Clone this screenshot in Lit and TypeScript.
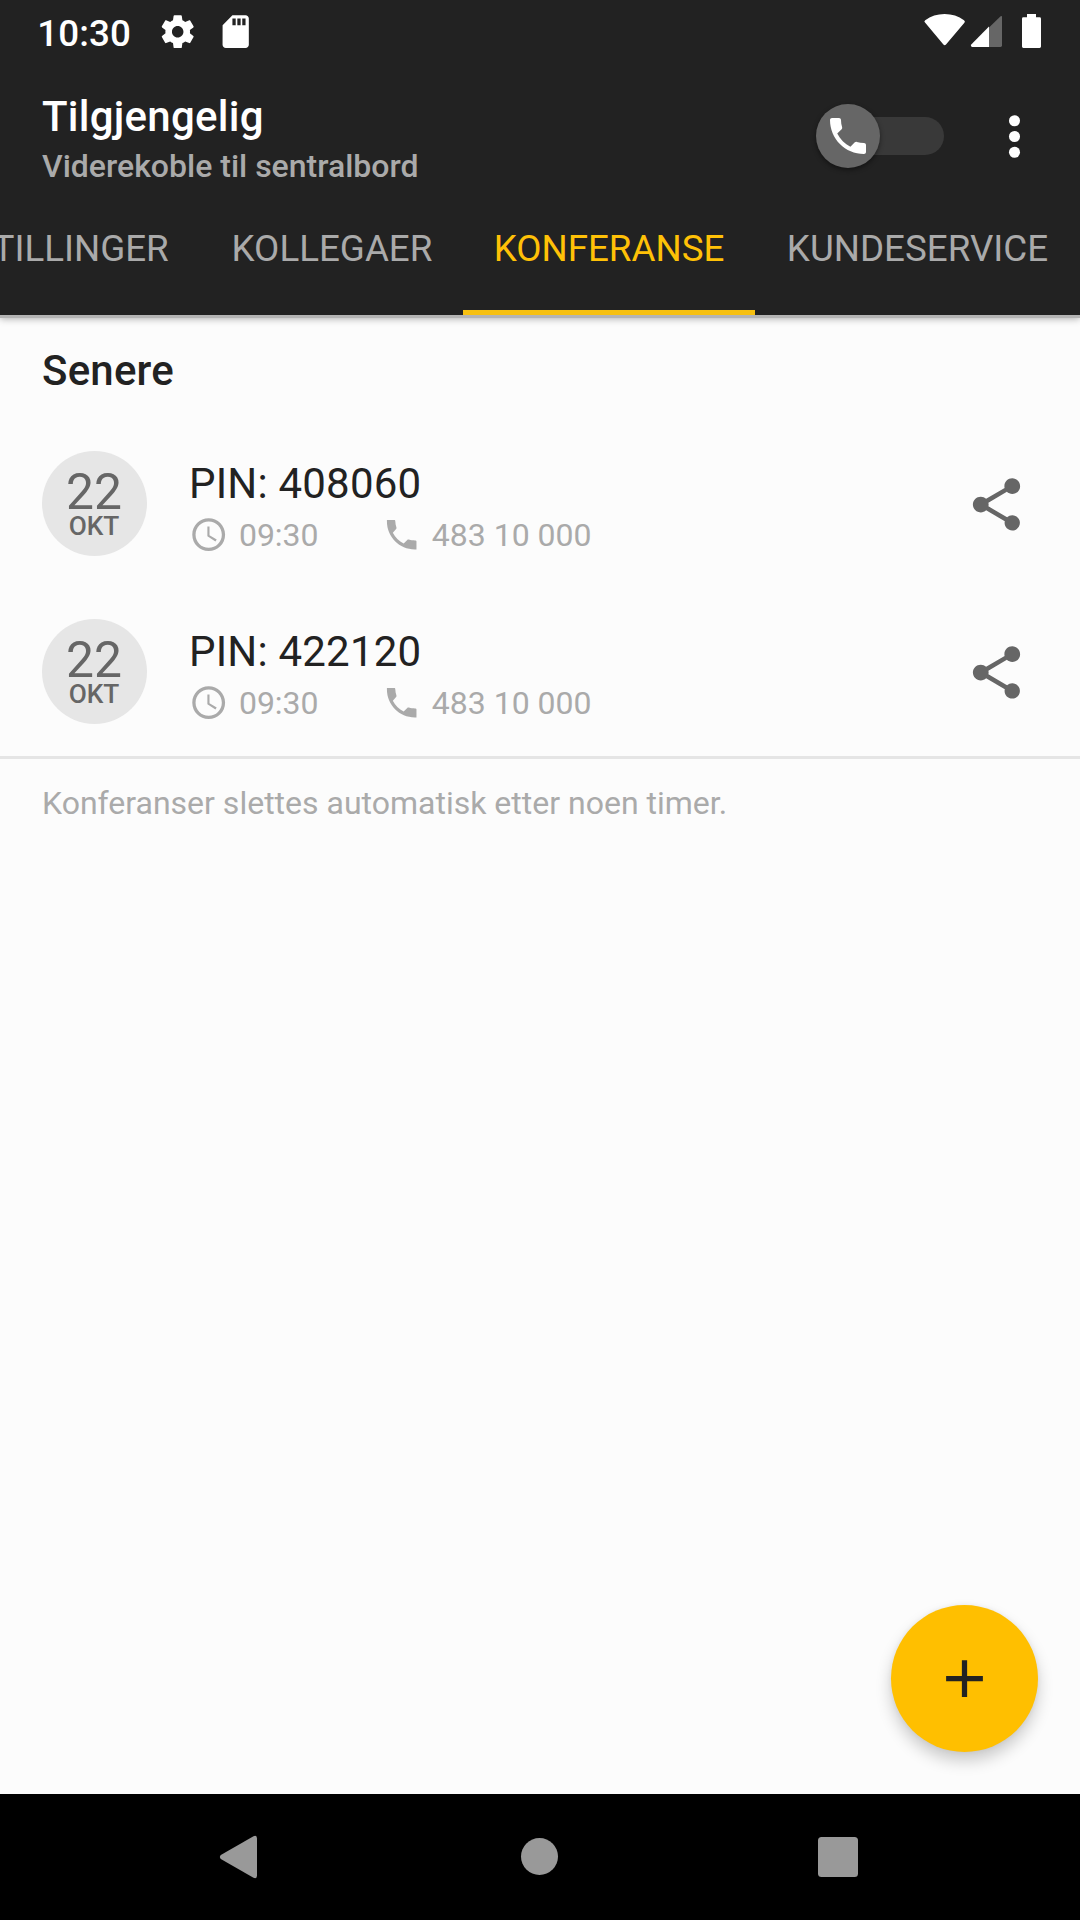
import { LitElement, html, css, svg } from "lit";
import { customElement, property } from "lit/decorators.js";
import { classMap } from "lit/directives/class-map.js";
import { styleMap } from "lit/directives/style-map.js";

const PHONE = svg`<path d="M6.62 10.79c1.44 2.83 3.76 5.14 6.59 6.59l2.2-2.2c.27-.27.67-.36 1.02-.24 1.12.37 2.33.57 3.57.57.55 0 1 .45 1 1V20c0 .55-.45 1-1 1-9.39 0-17-7.61-17-17 0-.55.45-1 1-1h3.5c.55 0 1 .45 1 1 0 1.25.2 2.45.57 3.57.11.35.03.74-.25 1.02l-2.2 2.2z"/>`;

const PHONE_SHARP = svg`<path d="M3 3H7.4C7.9 3 8.1 3.3 8.1 3.8C8.1 5.1 8.4 6.4 8.8 7.6C8.9 7.9 8.9 8.2 8.6 8.5L6.6 10.8C8 13.6 10.4 16 13.2 17.4L15.4 15.2C15.7 14.9 16 14.9 16.4 15C17.6 15.4 18.8 15.5 20.2 15.5C20.7 15.5 21 15.7 21 16.2V21H20C10.6 21 3 13.4 3 4Z"/>`;

const CLOCK = svg`<path d="M11.99 2C6.47 2 2 6.48 2 12s4.47 10 9.99 10C17.52 22 22 17.52 22 12S17.52 2 11.99 2zM12 20c-4.42 0-8-3.58-8-8s3.58-8 8-8 8 3.58 8 8-3.58 8-8 8zM12.5 7H11.2v6l4.9 3.1.8-1.2-4.4-2.6z"/>`;

const SHARE = svg`<path d="M18 16.08c-.76 0-1.44.3-1.96.77L8.91 12.7c.05-.23.09-.46.09-.7s-.04-.47-.09-.7l7.05-4.11c.54.5 1.25.81 2.04.81 1.66 0 3-1.34 3-3s-1.34-3-3-3-3 1.34-3 3c0 .24.04.47.09.7L8.04 9.81C7.5 9.31 6.79 9 6 9c-1.66 0-3 1.34-3 3s1.34 3 3 3c.79 0 1.5-.31 2.04-.81l7.12 4.16c-.05.21-.08.43-.08.65 0 1.61 1.31 2.92 2.92 2.92s2.92-1.31 2.92-2.92-1.31-2.92-2.92-2.92z"/>`;

const GEAR = svg`<path d="M19.43 12.98c.04-.32.07-.64.07-.98s-.03-.66-.07-.98l2.11-1.65c.19-.15.24-.42.12-.64l-2-3.46c-.12-.22-.39-.3-.61-.22l-2.49 1c-.52-.4-1.08-.73-1.69-.98l-.38-2.65C14.46 2.18 14.25 2 14 2h-4c-.25 0-.46.18-.49.42l-.38 2.65c-.61.25-1.17.59-1.69.98l-2.49-1c-.23-.09-.49 0-.61.22l-2 3.46c-.13.22-.07.49.12.64l2.11 1.65c-.04.32-.07.65-.07.98s.03.66.07.98l-2.11 1.65c-.19.15-.24.42-.12.64l2 3.46c.12.22.39.3.61.22l2.49-1c.52.4 1.08.73 1.69.98l.38 2.65c.03.24.24.42.49.42h4c.25 0 .46-.18.49-.42l.38-2.65c.61-.25 1.17-.59 1.69-.98l2.49 1c.23.09.49 0 .61-.22l2-3.46c.12-.22.07-.49-.12-.64l-2.11-1.65zM12 15.5c-1.93 0-3.5-1.57-3.5-3.5s1.57-3.5 3.5-3.5 3.5 1.57 3.5 3.5-1.57 3.5-3.5 3.5z"/>`;

const SD_CARD = svg`<path d="M18 2h-8L4.02 8 4 20c0 1.1.9 2 2 2h12c1.1 0 2-.9 2-2V4c0-1.1-.9-2-2-2zm-6 6h-2V4h2v4zm3 0h-2V4h2v4zm3 0h-2V4h2v4z"/>`;

interface Conference {
  day: string;
  month: string;
  pin: string;
  time: string;
  phone: string;
}

interface Tab {
  label: string;
  width: number;
}

const CONFERENCES: Conference[] = [
  { day: "22", month: "OKT", pin: "408060", time: "09:30", phone: "483 10 000" },
  { day: "22", month: "OKT", pin: "422120", time: "09:30", phone: "483 10 000" },
];

const TABS: Tab[] = [
  { label: "INNSTILLINGER", width: 325 },
  { label: "KOLLEGAER", width: 262 },
  { label: "KONFERANSE", width: 292 },
  { label: "KUNDESERVICE", width: 325 },
];

@customElement("status-bar")
export class StatusBar extends LitElement {
  static styles = css`
    :host {
      display: flex;
      justify-content: space-between;
      height: 63px;
      box-sizing: border-box;
      color: #fff;
      fill: #fff;
    }
    .left {
      display: flex;
      padding-left: 37.3px;
    }
    .time {
      width: 120.7px;
      font-size: 36.75px;
      font-weight: 500;
      letter-spacing: 0.1px;
      line-height: 67px;
    }
    .icon {
      width: 39.4px;
      height: 39.4px;
      margin: 12px 18.6px 0 0;
    }
    .right {
      display: block;
      width: 160px;
      height: 63px;
    }
  `;

  render() {
    return html`
      <div class="left">
        <span class="time">10:30</span>
        <svg class="icon" viewBox="0 0 24 24">${GEAR}</svg>
        <svg class="icon" viewBox="0 0 24 24">${SD_CARD}</svg>
      </div>
      <svg class="right" viewBox="920 0 160 63">
        <path d="M925 22.6Q923.6 21.4 925.2 20.2Q933.5 14 944.6 14T964 20.2Q965.6 21.4 964.4 22.8L946 44.5Q944.7 46 943.4 44.5Z" />
        <path d="M1000.6 16.3Q1002 15.4 1002 17V45.6Q1002 47 1000.6 47H989V27.5Z" fill="#666" />
        <path d="M989 26.6V47H972Q970.2 46.4 971 44.8Z" />
        <path d="M1027 14H1036V17.3H1039.6Q1041 17.3 1041 18.7V46.6Q1041 48 1039.6 48H1023.4Q1022 48 1022 46.6V18.7Q1022 17.3 1023.4 17.3H1027Z" />
      </svg>
    `;
  }
}

@customElement("call-switch")
export class CallSwitch extends LitElement {
  static styles = css`
    :host {
      display: flex;
      align-items: center;
      width: 128px;
      height: 64px;
    }
    .track {
      display: flex;
      align-items: center;
      width: 112px;
      height: 37.5px;
      margin-left: 16px;
      border-radius: 19px;
      background: #393939;
    }
    .thumb {
      display: flex;
      align-items: center;
      justify-content: center;
      flex: none;
      width: 64px;
      height: 64px;
      margin-left: -16px;
      border-radius: 50%;
      background: #666;
      box-shadow: 0 2px 5px rgba(0, 0, 0, 0.45);
    }
    .phone {
      width: 48px;
      height: 48px;
      fill: #fff;
    }
  `;

  render() {
    return html`<div class="track">
      <div class="thumb"><svg class="phone" viewBox="0 0 24 24">${PHONE}</svg></div>
    </div>`;
  }
}

@customElement("conference-row")
export class ConferenceRow extends LitElement {
  @property({ attribute: false }) item!: Conference;

  static styles = css`
    :host {
      display: flex;
      align-items: flex-start;
      height: 168px;
      box-sizing: border-box;
      padding: 31px 52px 0 42px;
    }
    .date {
      display: flex;
      flex-direction: column;
      align-items: center;
      flex: none;
      box-sizing: border-box;
      width: 105px;
      height: 105px;
      padding-right: 1px;
      border-radius: 50%;
      background: #e6e6e6;
      color: #666;
    }
    .day {
      margin-top: 21px;
      font-size: 49.8px;
      line-height: 40px;
    }
    .month {
      margin-top: 1px;
      font-size: 26.25px;
      font-weight: 500;
      line-height: 26px;
    }
    .body {
      flex: 1;
      padding: 8px 0 0 42px;
    }
    .pin {
      color: #222;
      font-size: 42px;
      letter-spacing: 0.2px;
      line-height: 50px;
    }
    .meta {
      display: flex;
      align-items: center;
      margin-top: 6px;
      height: 39.4px;
      color: #aaa;
      fill: #aaa;
      font-size: 32px;
      line-height: 40px;
    }
    .meta-icon {
      flex: none;
      width: 39.4px;
      height: 39.4px;
      margin-right: 10.5px;
    }
    .time,
    .phone {
      padding-top: 1.5px;
    }
    .time {
      width: 143px;
    }
    .share {
      width: 63px;
      height: 63px;
      margin: 21.5px 0 0;
      fill: #666;
    }
  `;

  render() {
    const c = this.item;
    return html`
      <div class="date">
        <span class="day">${c.day}</span>
        <span class="month">${c.month}</span>
      </div>
      <div class="body">
        <div class="pin">PIN: ${c.pin}</div>
        <div class="meta">
          <svg class="meta-icon" viewBox="0 0 24 24">${CLOCK}</svg>
          <span class="time">${c.time}</span>
          <svg class="meta-icon" viewBox="0 0 24 24">${PHONE_SHARP}</svg>
          <span class="phone">${c.phone}</span>
        </div>
      </div>
      <svg class="share" viewBox="0 0 24 24">${SHARE}</svg>
    `;
  }
}

@customElement("app-root")
export class AppRoot extends LitElement {
  static styles = css`
    :host {
      display: flex;
      flex-direction: column;
      position: relative;
      width: 1080px;
      height: 1920px;
      overflow: hidden;
      background: #fcfcfc;
      font-family: Roboto, "Liberation Sans", sans-serif;
    }
    .header {
      flex: none;
      height: 315px;
      background: #222;
      box-shadow: 0 3px 0 #b4b4b4, 0 4px 7px rgba(0, 0, 0, 0.3);
    }
    .toolbar {
      display: flex;
      height: 147px;
    }
    .titles {
      flex: 1;
      padding: 28.5px 0 0 42px;
    }
    .title {
      color: #fff;
      font-size: 42px;
      font-weight: 500;
      letter-spacing: 0.25px;
      line-height: 50px;
    }
    .subtitle {
      margin-top: 5px;
      color: #aaa;
      font-size: 32px;
      font-weight: 500;
      line-height: 38px;
    }
    .switch {
      margin-top: 41px;
    }
    .more {
      width: 63px;
      height: 63px;
      margin: 42px 34px 0 39px;
      fill: #fff;
    }
    .tabs {
      display: flex;
      justify-content: flex-end;
      height: 105px;
      overflow: hidden;
    }
    .tab {
      flex: none;
      box-sizing: border-box;
      height: 105px;
      color: #aaa;
      font-size: 36.75px;
      line-height: 77px;
      text-align: center;
      white-space: nowrap;
    }
    .tab.active {
      color: #ffc107;
      border-bottom: 5px solid #f7c010;
    }
    .content {
      flex: 1;
    }
    .section {
      height: 105px;
      box-sizing: border-box;
      padding: 31px 42px 0;
      color: #222;
      font-size: 42px;
      font-weight: 500;
      letter-spacing: 0.2px;
      line-height: 50px;
    }
    .note {
      border-top: 3px solid #e5e5e5;
      padding: 25px 42px 0;
      color: #aaa;
      font-size: 32px;
      line-height: 38px;
    }
    .fab {
      position: absolute;
      right: 42px;
      bottom: 168px;
      display: flex;
      align-items: center;
      justify-content: center;
      width: 147px;
      height: 147px;
      border-radius: 50%;
      background: #ffbf00;
      box-shadow: 0 9px 16px rgba(0, 0, 0, 0.2), 0 0 5px rgba(0, 0, 0, 0.06);
    }
    .plus {
      width: 63px;
      height: 63px;
      fill: #222;
    }
    .nav {
      flex: none;
      height: 126px;
      background: #000;
    }
    .nav-icons {
      display: block;
      width: 1080px;
      height: 126px;
      fill: #999;
    }
  `;

  render() {
    return html`
      <div class="header">
        <status-bar></status-bar>
        <div class="toolbar">
          <div class="titles">
            <div class="title">Tilgjengelig</div>
            <div class="subtitle">Viderekoble til sentralbord</div>
          </div>
          <call-switch class="switch"></call-switch>
          <svg class="more" viewBox="0 0 24 24">
            <circle cx="12" cy="6" r="2.1" />
            <circle cx="12" cy="12" r="2.1" />
            <circle cx="12" cy="18" r="2.1" />
          </svg>
        </div>
        <div class="tabs">
          ${TABS.map(
            (t) => html`<div
              class=${classMap({ tab: true, active: t.label === "KONFERANSE" })}
              style=${styleMap({ width: `${t.width}px` })}
            >${t.label}</div>`
          )}
        </div>
      </div>
      <div class="content">
        <div class="section">Senere</div>
        ${CONFERENCES.map((c) => html`<conference-row .item=${c}></conference-row>`)}
        <div class="note">Konferanser slettes automatisk etter noen timer.</div>
      </div>
      <div class="fab">
        <svg class="plus" viewBox="0 0 24 24"><path d="M19 13h-6v6h-2v-6H5v-2h6V5h2v6h6z" /></svg>
      </div>
      <div class="nav">
        <svg class="nav-icons" viewBox="0 1794 1080 126">
          <path d="M220.8 1859Q219 1857 220.8 1855L253.5 1836.3Q257 1834.8 257 1838.5V1875.5Q257 1879.2 253.5 1877.7Z" />
          <circle cx="539.5" cy="1856.5" r="18.5" />
          <rect x="818" y="1837" width="40" height="40" rx="3.5" />
        </svg>
      </div>
    `;
  }
}
